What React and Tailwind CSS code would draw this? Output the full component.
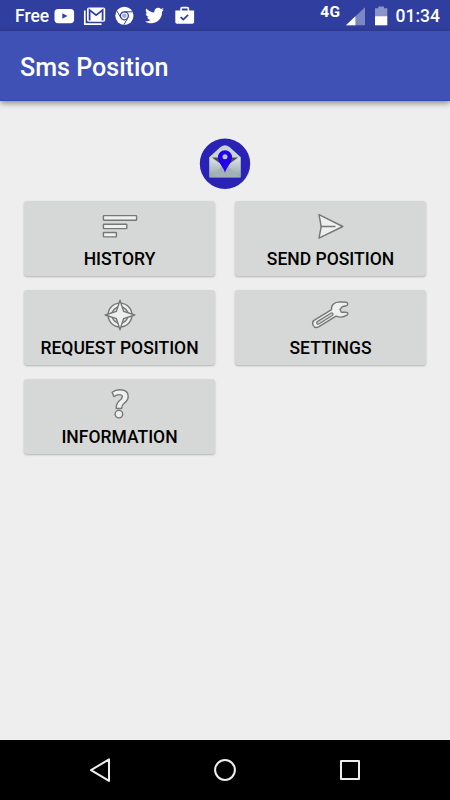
import { FaTwitter } from 'react-icons/fa';

const outline = {
  fill: '#eeefee',
  stroke: '#757776',
  strokeWidth: 1.4,
  strokeLinejoin: 'round',
};

function HistoryIcon() {
  return (
    <svg width="50" height="40" viewBox="0 1 50 40" {...outline}>
      <rect x="8.4" y="10.6" width="33.2" height="4.6" rx="0.6" />
      <rect x="8.4" y="19.2" width="23.4" height="4.4" rx="0.6" />
      <rect x="8.4" y="27.5" width="13" height="4.4" rx="0.6" />
    </svg>
  );
}

function SendIcon() {
  return (
    <svg width="50" height="40" viewBox="0.6 1 50 40" {...outline}>
      <path d="M13.6 9.6 37.4 21.5 13.6 33.2 15.8 21.5Z" />
      <path d="M15.8 21.5H29.5" strokeLinecap="round" />
    </svg>
  );
}

function TargetIcon() {
  return (
    <svg width="50" height="40" viewBox="0 0 50 40" {...outline}>
      <circle cx="25" cy="20" r="11.9" />
      <circle cx="25" cy="20" r="8.2" fill="#d6d8d7" />
      <path d="M25 5.2 28.6 16.4 39.8 20 28.6 23.6 25 34.8 21.4 23.6 10.2 20 21.4 16.4Z" />
    </svg>
  );
}

function WrenchIcon() {
  return (
    <svg width="50" height="40" viewBox="0.6 0 50 40" {...outline}>
      <path d="M8.6 25.4 26.2 14.6C25.3 10.6 29 7 34 6.9L40.8 7.3C42.8 7.7 42.7 10.2 41 10.7L36.6 11.8 34.6 14.5 36 17.3 40.6 17.2C42.7 17.2 43 19.1 41.5 20.2 38.6 22.2 34 22.4 30.6 21.2L13.6 31.7C11 33 8.7 32.2 7.7 30.2 6.8 28.2 7.1 26.5 8.6 25.4Z" />
      <path d="M12.6 27.8 26.2 19.4" strokeWidth="4" strokeLinecap="round" />
      <path d="M12.6 27.8 26.2 19.4" stroke="#d6d8d7" strokeWidth="1.5" strokeLinecap="round" />
    </svg>
  );
}

function QuestionIcon() {
  return (
    <svg width="50" height="40" viewBox="0 1 50 40" {...outline}>
      <path d="M17.1 9.3C19.3 7.6 21.8 6.8 24.7 6.8 30 6.8 33.2 9.3 33.2 13.4 33.2 16.7 31.2 18.8 28.7 20.7 26.9 22.1 26.7 23 26.6 25.4H21.2C21.1 21.5 22.1 19.5 24.6 17.5 26.7 15.9 27.3 15.1 27.3 13.7 27.3 12.3 26.3 11.6 24.3 11.6 22.5 11.6 20.8 12.3 18.9 13.6Z" />
      <circle cx="23.9" cy="31.1" r="3.8" />
    </svg>
  );
}

const actions = [
  { label: 'HISTORY', Icon: HistoryIcon },
  { label: 'SEND POSITION', Icon: SendIcon },
  { label: 'REQUEST POSITION', Icon: TargetIcon },
  { label: 'SETTINGS', Icon: WrenchIcon },
  { label: 'INFORMATION', Icon: QuestionIcon },
];

function StatusBar() {
  return (
    <div className="flex h-[31px] items-center justify-between bg-[#303f9f] pl-[15px] pr-[10px] text-[17.5px] font-medium text-white">
      <div className="flex items-center">
        <span className="w-[39px] pt-[2px]">Free</span>
        <svg width="21" height="20" viewBox="0 0 21 20" fill="#fff">
          <rect x="0.5" y="3" width="19.6" height="14.2" rx="3.6" />
          <path d="M8.3 7.3 13.4 10 8.3 12.8Z" fill="#303f9f" />
        </svg>
        <svg className="ml-[8px]" width="23" height="20" viewBox="0 0 23 20" fill="none" stroke="#fff">
          <path d="M1.8 4.5V18.2H18.6" strokeWidth="1.7" strokeLinejoin="round" />
          <rect x="4" y="1.4" width="18.2" height="14.4" rx="1.8" fill="#fff" stroke="none" />
          <path d="M6.6 14.4V4.1L13.1 9.2 19.6 4.1V14.4" stroke="#303f9f" strokeWidth="1.8" />
        </svg>
        <svg className="ml-[9px]" width="19" height="20" viewBox="0 0 19 20" fill="none" stroke="#303f9f" strokeWidth="1">
          <circle cx="9.4" cy="9.8" r="9.1" fill="#fff" stroke="none" />
          <circle cx="9.4" cy="9.8" r="4" strokeWidth="1.2" />
          <circle cx="9.4" cy="9.8" r="2.3" fill="#a3abd6" stroke="none" />
          <path d="M9.4 5.8H17.6M5.9 11.8 1.8 4.9M12.9 11.8 8.9 18.8" />
        </svg>
        <FaTwitter className="ml-[11px]" size={19} />
        <svg className="ml-[11px]" width="20" height="20" viewBox="0 0 20 20">
          <path d="M6 5.5V2.8Q6 1.6 7.2 1.6H12.2Q13.4 1.6 13.4 2.8V5.5" fill="none" stroke="#fff" strokeWidth="1.6" />
          <path d="M0.3 4.6H19.1V16Q19.1 17.8 17.3 17.8H2.1Q0.3 17.8 0.3 16Z" fill="#fff" />
          <path d="M5.6 11.2 8.3 13.5 13.1 8.8" fill="none" stroke="#303f9f" strokeWidth="1.7" />
        </svg>
      </div>
      <div className="flex items-center">
        <span className="-mt-[8px] text-[15.5px] leading-[18px] tracking-[0.5px] font-bold">4G</span>
        <svg className="ml-[5px]" width="20" height="20" viewBox="0 0 20 20">
          <path d="M19 1.2V19.3H0Z" fill="#7c86c2" />
          <path d="M9.4 10.2V19.3H0Z" fill="#fff" />
        </svg>
        <svg className="ml-[9px]" width="13" height="20" viewBox="0 0 13 20">
          <path d="M3.3 0.5H9V2.3H12.3V10.5H0V2.3H3.3Z" fill="#8b94c9" />
          <path d="M0 10.2H12.3V19.3H0Z" fill="#fff" />
        </svg>
        <span className="ml-[8px] pt-[2px]">01:34</span>
      </div>
    </div>
  );
}

function Logo() {
  return (
    <svg width="52" height="52" viewBox="0 0 52 52">
      <defs>
        <linearGradient id="paper" x1="0" y1="0" x2="0" y2="1">
          <stop offset="0" stopColor="#dfe6e9" />
          <stop offset="1" stopColor="#93a3aa" />
        </linearGradient>
      </defs>
      <circle cx="26" cy="25.7" r="25.2" fill="#2a22b4" />
      <path d="M10.5 19 21.5 9Q26 5.5 30.5 9L41.5 19V39.3H10.5Z" fill="#c9d4d8" />
      <path d="M13 19.5H39L26 29Z" fill="#4a4a4a" />
      <path d="M10.5 19 22 27Q26 29.5 30 27L41.5 19V39.3H10.5Z" fill="url(#paper)" />
      <path d="M10.5 39.3 22 29.5Q26 27 30 29.5L41.5 39.3Z" fill="#a3b1b7" />
      <path d="M26 34.8C25 29.8 19 24.8 19 19.2A7 7 0 0 1 33 19.2C33 24.8 27 29.8 26 34.8Z" fill="#2200ee" />
      <circle cx="26" cy="18.8" r="2.5" fill="#b9c6cb" />
    </svg>
  );
}

function ActionButton({ label, Icon }) {
  return (
    <button className="flex h-[75px] flex-col items-center rounded-[3px] bg-[#d6d8d7] pt-[5px] text-[17.5px] font-medium text-black shadow-[0_1px_2px_rgba(0,0,0,0.25)]">
      <Icon />
      <span className="whitespace-nowrap leading-[26px]">{label}</span>
    </button>
  );
}

function NavBar() {
  return (
    <div className="flex h-[60px] items-center justify-between bg-black px-[88px]">
      <svg width="24" height="26" viewBox="0 0 24 26" fill="none" stroke="#eee" strokeWidth="2" strokeLinejoin="round">
        <path d="M21 2.4V23.9L3 13.1Z" />
      </svg>
      <svg width="24" height="26" viewBox="0 0 24 26" fill="none" stroke="#eee" strokeWidth="2">
        <circle cx="12" cy="13" r="9.9" />
      </svg>
      <svg width="24" height="26" viewBox="0 0 24 26" fill="none" stroke="#eee" strokeWidth="2" strokeLinejoin="round">
        <rect x="3" y="4" width="18" height="18" />
      </svg>
    </div>
  );
}

export default function App() {
  return (
    <div className="flex h-[800px] w-[450px] flex-col overflow-hidden bg-[#eeeeee] font-['Roboto',sans-serif]">
      <StatusBar />
      <header className="flex h-[70px] items-center border-b border-[#3049b5] bg-[#3f51b5] pl-[20px] pt-[5px] text-[25.1px] font-medium text-white shadow-[0_2px_6px_rgba(0,0,0,0.45)]">
        Sms Position
      </header>
      <main className="flex flex-1 flex-col items-center pt-[37px]">
        <Logo />
        <div className="mt-[11px] grid w-[402px] grid-cols-2 gap-x-[20px] gap-y-[14px]">
          {actions.map(a => (
            <ActionButton key={a.label} label={a.label} Icon={a.Icon} />
          ))}
        </div>
      </main>
      <NavBar />
    </div>
  );
}
